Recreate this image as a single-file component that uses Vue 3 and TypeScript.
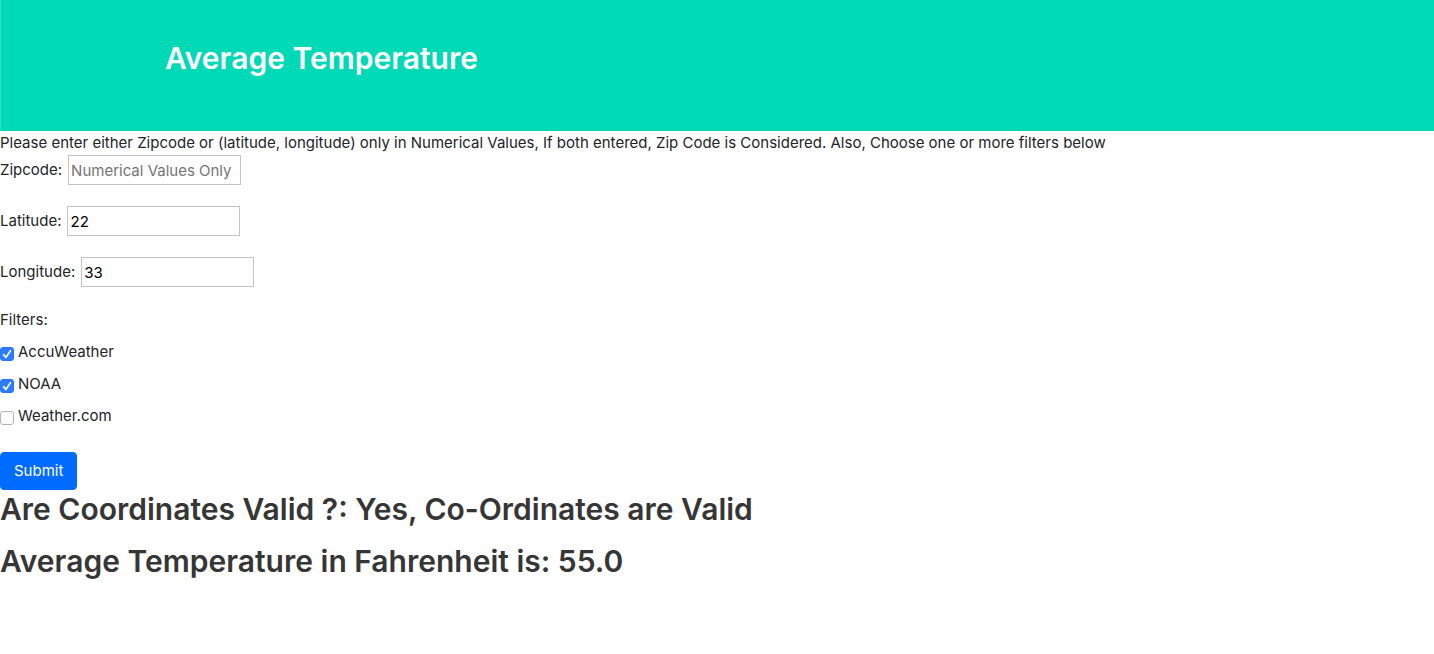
<script setup lang="ts">
import { ref } from 'vue'

const zipcode = ref('')
const latitude = ref('22')
const longitude = ref('33')
const filters = ref([
  { id: 'accuweather', name: 'AccuWeather', checked: true },
  { id: 'noaa', name: 'NOAA', checked: true },
  { id: 'weathercom', name: 'Weather.com', checked: false },
])
</script>

<template>
  <div class="page">
    <header class="banner">
      <h2>Average Temperature</h2>
    </header>
    <main>
      <form @submit.prevent>
        <p class="hint">Please enter either Zipcode or (latitude, longitude) only in Numerical Values, If both entered, Zip Code is Considered. Also, Choose one or more filters below</p>
        <div class="field">
          <label for="zipcode">Zipcode:</label>
          <input id="zipcode" v-model="zipcode" type="text" placeholder="Numerical Values Only" />
        </div>
        <div class="field">
          <label for="latitude">Latitude:</label>
          <input id="latitude" v-model="latitude" type="text" />
        </div>
        <div class="field">
          <label for="longitude">Longitude:</label>
          <input id="longitude" v-model="longitude" type="text" />
        </div>
        <fieldset class="filters">
          <legend>Filters:</legend>
          <div v-for="f in filters" :key="f.id" class="option">
            <span class="tick">
              <input :id="f.id" v-model="f.checked" type="checkbox" />
              <svg v-if="f.checked" viewBox="0 0 14 14" aria-hidden="true">
                <path d="M3.6 7.6 6 10.4 10.5 3.6" />
              </svg>
            </span>
            <label :for="f.id">{{ f.name }}</label>
          </div>
        </fieldset>
        <button type="submit">Submit</button>
      </form>
      <h2>Are Coordinates Valid ?: Yes, Co-Ordinates are Valid</h2>
      <h2>Average Temperature in Fahrenheit is: 55.0</h2>
    </main>
  </div>
</template>

<style>
body {
  margin: 0;
  background: #fff;
}
</style>

<style scoped>
.page {
  font: 400 15px/24px Inter, "Liberation Sans", sans-serif;
  color: #212529;
}
h2 {
  margin: 0 0 14px;
  font-size: 30px;
  line-height: 38px;
  font-weight: 600;
  color: #363636;
}
.banner {
  padding: 39px 164px 54px;
  border-left: 1px solid #33dfc2;
  background: #00d9b5;
}
.banner h2 {
  margin: 0;
  color: #fff;
}
.hint {
  margin: 0;
}
.field {
  display: flex;
  align-items: center;
  gap: 6px;
  margin-bottom: 21px;
}
.field input {
  box-sizing: border-box;
  width: 173px;
  height: 30px;
  padding: 1px 2px;
  border: 1px solid #c4c4c4;
  border-radius: 0;
  background: #fff;
  color: #000;
  font: inherit;
}
.field input::placeholder {
  color: #757575;
  opacity: 1;
}
.filters {
  margin: 0 0 16px;
  padding: 0;
  border: 0;
}
.filters legend {
  padding: 0;
  margin-bottom: 8px;
}
.option {
  display: flex;
  align-items: center;
  gap: 4px;
  margin-bottom: 8px;
}
.tick {
  display: grid;
  padding-top: 4px;
}
.tick input {
  grid-area: 1 / 1;
  appearance: none;
  box-sizing: border-box;
  width: 14px;
  height: 14px;
  margin: 0;
  border: 1px solid #b5b5b5;
  border-radius: 3px;
  background: #fff;
}
.tick input:checked {
  border-color: #2a74f8;
  background: #2f7bff;
}
.tick svg {
  grid-area: 1 / 1;
  width: 14px;
  height: 14px;
  pointer-events: none;
}
.tick path {
  fill: none;
  stroke: #fff;
  stroke-width: 1.7;
  stroke-linecap: round;
  stroke-linejoin: round;
}
button {
  display: block;
  padding: 6px 13px;
  border: 1px solid #006bff;
  border-radius: 4px;
  background: #006bff;
  color: #fff;
  font: inherit;
}
</style>
